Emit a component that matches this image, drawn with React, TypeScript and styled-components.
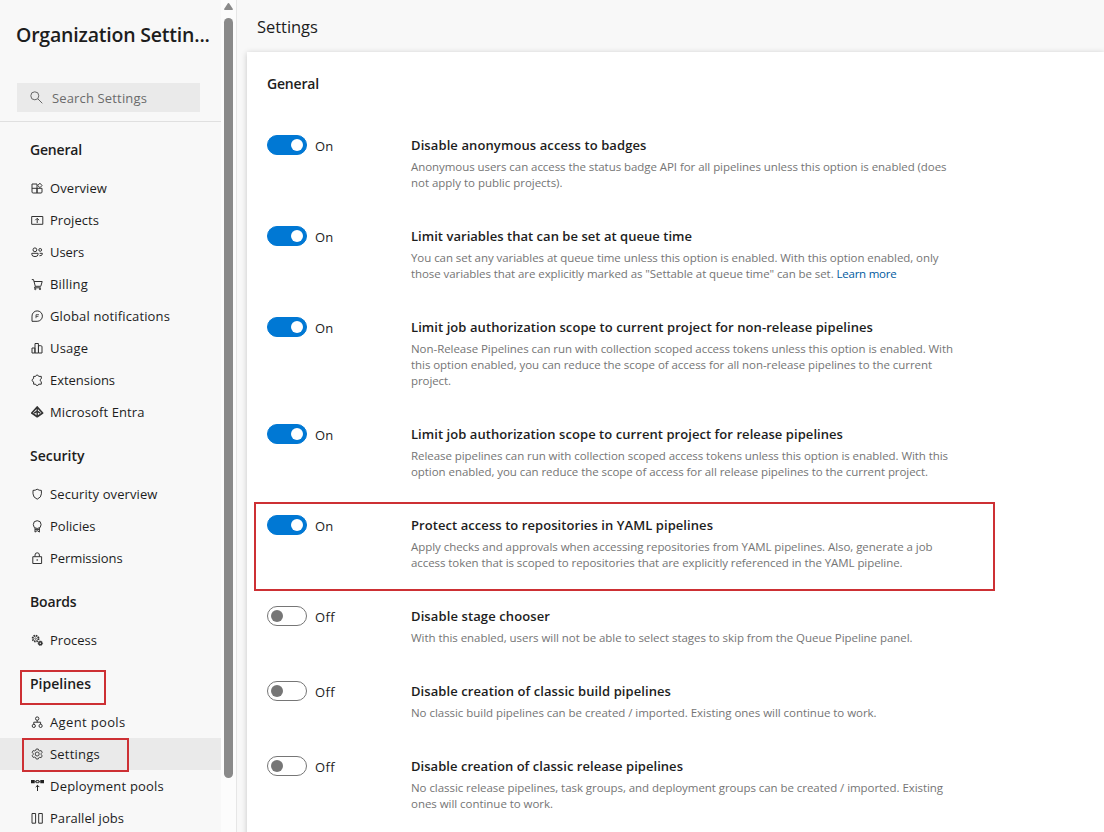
import React from 'react';
import styled, { createGlobalStyle } from 'styled-components';

const GlobalStyle = createGlobalStyle`
  *, *::before, *::after { box-sizing: border-box; }
  body {
    margin: 0;
    overflow: hidden;
    background: #f8f8f8;
    color: #1d1d1d;
    font-family: "Open Sans", "Noto Sans", sans-serif;
    font-size: 13px;
  }
`;

const Page = styled.div`
  display: flex;
  width: 100%;
  height: 832px;
  overflow: hidden;
`;

const Sidebar = styled.aside`
  flex: none;
  width: 221px;
  height: 832px;
  overflow: hidden;
`;

const SidebarTop = styled.header`
  height: 122px;
  padding: 20px 0 0 16px;
  border-bottom: 1px solid #e0e0e0;
`;

const Tracked = styled.span<{ $track?: number }>`
  white-space: pre;
  letter-spacing: ${({ $track = 0 }) => $track}px;
`;

const OrgTitle = styled.h1`
  margin: 0;
  font-size: 19.5px;
  line-height: 30px;
  font-weight: 600;
  white-space: nowrap;
`;

const SearchBox = styled.div`
  display: flex;
  align-items: center;
  gap: 9px;
  width: 183px;
  height: 29px;
  margin-top: 33px;
  margin-left: 1px;
  padding: 0 0 0 13px;
  background: #eaeaea;
  color: #6b6b6b;
`;

const NavHeading = styled.h2`
  display: flex;
  align-items: center;
  height: 50px;
  margin: 0;
  padding: 4px 0 0 30px;
  font-size: 14px;
  font-weight: 600;
`;

const NavItem = styled.div<{ $selected?: boolean }>`
  display: flex;
  align-items: center;
  gap: 6px;
  height: 32px;
  padding-left: 31px;
  background: ${({ $selected }) => ($selected ? '#eaeaea' : 'transparent')};
`;

const NavIcon = styled.svg<{ $muted?: boolean }>`
  flex: none;
  width: 13px;
  height: 13px;
  fill: none;
  stroke: ${({ $muted }) => ($muted ? '#666' : '#333')};
  stroke-width: 1;
`;

const NavMark = styled.div<{ $top: number; $left: number; $width: number; $height: number }>`
  position: relative;
  &::after {
    content: '';
    position: absolute;
    z-index: 1;
    top: ${({ $top }) => $top}px;
    left: ${({ $left }) => $left}px;
    width: ${({ $width }) => $width}px;
    height: ${({ $height }) => $height}px;
    border: 2px solid #cd3034;
  }
`;

const ScrollTrack = styled.div`
  flex: none;
  display: flex;
  flex-direction: column;
  align-items: center;
  width: 16px;
  height: 832px;
  padding-top: 2px;
  background: #fcfcfc;
  border-right: 1px solid #e6e6e6;
`;

const ScrollArrow = styled.svg`
  width: 9px;
  height: 9px;
  fill: #8a8a8a;
`;

const ScrollThumb = styled.div`
  width: 9px;
  height: 760px;
  margin-top: 7px;
  border-radius: 4.5px;
  background: #8a8a8a;
`;

const Main = styled.main`
  display: flex;
  flex-direction: column;
  flex: 1;
  min-width: 0;
  padding-left: 10px;
`;

const MainTitle = styled.h1`
  flex: none;
  height: 52px;
  margin: 0;
  padding: 14px 0 0 10px;
  font-size: 16.5px;
  line-height: 26px;
  font-weight: 400;
`;

const Card = styled.section`
  flex: 1;
  padding: 20px 0 0 20px;
  background: #fff;
  box-shadow: 0 1px 6px rgba(0, 0, 0, 0.2);
`;

const CardTitle = styled.h2`
  height: 63px;
  margin: 0;
  font-size: 14px;
  line-height: 24px;
  font-weight: 600;
`;

const SettingRow = styled.div`
  position: relative;
  display: flex;
  width: 728px;
  padding-bottom: 35px;
`;

const RowMark = styled.div`
  position: absolute;
  top: -13px;
  left: -13px;
  width: 741px;
  height: 89px;
  border: 2px solid #cd3034;
`;

const ToggleCell = styled.div`
  display: flex;
  gap: 8px;
  width: 144px;
  line-height: 22px;
`;

const Switch = styled.div<{ $on: boolean }>`
  display: flex;
  align-items: center;
  justify-content: ${({ $on }) => ($on ? 'flex-end' : 'flex-start')};
  width: 40px;
  height: 20px;
  padding: 0 3px;
  border: 1px solid ${({ $on }) => ($on ? '#0078d4' : '#767676')};
  border-radius: 10px;
  background: ${({ $on }) => ($on ? '#0078d4' : '#fff')};
  &::after {
    content: '';
    width: 12px;
    height: 12px;
    border-radius: 50%;
    background: ${({ $on }) => ($on ? '#fff' : '#767676')};
  }
`;

const SettingTitle = styled.h3`
  margin: 0 0 4px;
  font-size: 13px;
  line-height: 20px;
  font-weight: 600;
`;

const Line = styled.div`
  color: #757575;
  font-size: 11.5px;
  line-height: 16px;
  white-space: pre;
`;

const Link = styled.a`
  color: #005a9e;
  letter-spacing: -0.24px;
`;

const icons: Record<string, React.ReactNode> = {
  overview: (
    <path d="M1 2h5v9H2.2Q1 11 1 10zM1 6.3h10M6 6.3V11h4q1 0 1-1V6.3M8.9 1.2 11 3.5 8.9 5.7 6.8 3.5z" />
  ),
  projects: <path d="M.7 2.5h11.1v7.8H.7zM6.2 9V4.6M4.3 6.2l1.9-1.9 1.9 1.9" />,
  users: (
    <>
      <circle cx="3.9" cy="3.8" r="1.9" />
      <circle cx="9.2" cy="3.9" r="1.4" />
      <path d="M.8 7.3h6.3v1q0 2.3-3.1 2.3T.8 8.3zM8.6 7.3h2.7v.8q0 1.7-2.9 1.7" />
    </>
  ),
  billing: (
    <>
      <path d="M.8 1.6h1.7l1.8 6.7h5.5l1.4-4.8H3M4.3 8.3l-.9 1.5h6.3" />
      <circle cx="4.3" cy="11" r=".7" />
      <circle cx="9" cy="11" r=".7" />
    </>
  ),
  notifications: (
    <>
      <path d="M1 11.3V6.1a5.2 5.2 0 1 1 5.2 5.2z" />
      <path d="M5 8.2V4.7h3M5 6.4h2.4" strokeWidth=".8" />
    </>
  ),
  usage: <path d="M1 6h2.9v5H1zM4 1.5h3.4V11H4zM7.5 3.7h2.3q1.2 0 1.2 1.1V11H7.5z" />,
  extensions: (
    <path
      d="M2.6 2.4h2c.2-1.8 2.9-1.8 3.1 0h2.6v2.3c-1.5.3-1.5 2.7 0 3v2.5H7.7c-.2 1.8-2.9 1.8-3.1 0h-2V7.9c-2-.2-2-3.1 0-3.3z"
      strokeLinejoin="round"
    />
  ),
  entra: (
    <>
      <path d="M6.2 1 11.6 7 6.2 10.7.8 7z" strokeWidth="1.7" strokeLinejoin="round" />
      <path d="M6.2 2v8M3.2 7.1l3-2 3 2" strokeWidth="1.4" />
    </>
  ),
  shield: <path d="M6.2 1.2Q8 2.5 10.4 2.4v3.4q0 3.6-4.2 5.4Q2 9.4 2 5.8V2.4Q4.4 2.5 6.2 1.2z" />,
  policies: (
    <>
      <circle cx="6.2" cy="4.6" r="3.9" />
      <path d="M4 8v4.1l2.2-1.5 2.2 1.5V8M4 9.6h4.4" />
    </>
  ),
  lock: (
    <>
      <path d="M1.8 4.7h8.8v6.8H1.8zM4 4.6V3a2.2 2.2 0 0 1 4.4 0v1.6" />
      <path d="M5.6 8h1.2" strokeWidth="1.3" />
    </>
  ),
  process: (
    <>
      <circle cx="4.6" cy="4.6" r="3.2" strokeWidth="1.4" strokeDasharray="1.5 1" />
      <circle cx="4.6" cy="4.6" r="2.4" strokeWidth=".7" />
      <circle cx="4.6" cy="4.6" r=".8" strokeWidth=".7" />
      <circle cx="9.3" cy="9.2" r="1.5" strokeWidth="1.6" />
      <circle cx="9.3" cy="9.2" r="2.3" strokeWidth=".7" strokeDasharray="1 .8" />
    </>
  ),
  agents: (
    <>
      <circle cx="6.2" cy="2.6" r="1.7" />
      <circle cx="2.8" cy="9.9" r="1.6" />
      <circle cx="9.6" cy="9.9" r="1.6" />
      <path d="M6.2 4.3v1.9M2.8 8.2v-2h6.8v2" />
    </>
  ),
  gear: (
    <>
      <path
        d="M5.2 1h2l.5 1.4 1 .5 1.5-.3 1 1.7-1 1.2v1.2l1 1.2-1 1.7-1.5-.3-1 .5L7.2 11h-2l-.5-1.4-1-.5-1.5.3-1-1.7 1-1.2V5.5l-1-1.2 1-1.7 1.5.3 1-.5z"
        strokeWidth=".9"
      />
      <circle cx="6.2" cy="6" r="2" strokeWidth=".9" />
    </>
  ),
  deploy: (
    <>
      <path d="M0 0h3.7v3.2H0zM9.300 0H13v3.200H9.300z" fill="#222" stroke="none" />
      <path d="M5.100.6h2.800v2.100H5.100zM3.700 1.700h1.400M7.900 1.700h1.400" stroke="#222" strokeWidth=".9" />
      <path d="M6.500 11V5.300M4.700 7.100l1.800-1.800 1.800 1.800" stroke="#222" />
    </>
  ),
  parallel: <path d="M1 1.5h3.6v9.7H1zM7.7 1.5h3.6v9.7H7.700z" />,
};

type Item = { icon: string; label: string; track: number; selected?: boolean };
type Group = { title: string; track: number; marked?: boolean; items: Item[] };

const groups: Group[] = [
  {
    title: 'General',
    track: -0.18,
    items: [
      { icon: 'overview', label: 'Overview', track: 0.08 },
      { icon: 'projects', label: 'Projects', track: 0.05 },
      { icon: 'users', label: 'Users', track: -0.1 },
      { icon: 'billing', label: 'Billing', track: 0.2 },
      { icon: 'notifications', label: 'Global notifications', track: 0.145 },
      { icon: 'usage', label: 'Usage', track: 0.2 },
      { icon: 'extensions', label: 'Extensions', track: -0.04 },
      { icon: 'entra', label: 'Microsoft Entra', track: 0.09 },
    ],
  },
  {
    title: 'Security',
    track: -0.01,
    items: [
      { icon: 'shield', label: 'Security overview', track: 0.1 },
      { icon: 'policies', label: 'Policies', track: 0.04 },
      { icon: 'lock', label: 'Permissions', track: -0.08 },
    ],
  },
  {
    title: 'Boards',
    track: -0.16,
    items: [{ icon: 'process', label: 'Process', track: 0.02 }],
  },
  {
    title: 'Pipelines',
    track: 0.014,
    marked: true,
    items: [
      { icon: 'agents', label: 'Agent pools', track: 0.35 },
      { icon: 'gear', label: 'Settings', track: 0.22, selected: true },
      { icon: 'deploy', label: 'Deployment pools', track: 0.207 },
      { icon: 'parallel', label: 'Parallel jobs', track: 0.05 },
    ],
  },
];

type Setting = {
  title: string;
  track: number;
  on: boolean;
  lines: [string, number][];
  link?: string;
  marked?: boolean;
};

const settings: Setting[] = [
  {
    title: 'Disable anonymous access to badges',
    track: 0.102,
    on: true,
    lines: [
      ['Anonymous users can access the status badge API for all pipelines unless this option is enabled (does', -0.059],
      ['not apply to public projects).', -0.021],
    ],
  },
  {
    title: 'Limit variables that can be set at queue time',
    track: 0.034,
    on: true,
    lines: [
      ['You can set any variables at queue time unless this option is enabled. With this option enabled, only', -0.062],
      ['those variables that are explicitly marked as "Settable at queue time" can be set. ', -0.075],
    ],
    link: 'Learn more',
  },
  {
    title: 'Limit job authorization scope to current project for non-release pipelines',
    track: 0.072,
    on: true,
    lines: [
      ['Non-Release Pipelines can run with collection scoped access tokens unless this option is enabled. With', -0.049],
      ['this option enabled, you can reduce the scope of access for all non-release pipelines to the current', -0.058],
      ['project.', -0.08],
    ],
  },
  {
    title: 'Limit job authorization scope to current project for release pipelines',
    track: 0.057,
    on: true,
    lines: [
      ['Release pipelines can run with collection scoped access tokens unless this option is enabled. With this', -0.061],
      ['option enabled, you can reduce the scope of access for all release pipelines to the current project.', -0.061],
    ],
  },
  {
    title: 'Protect access to repositories in YAML pipelines',
    track: 0.068,
    on: true,
    marked: true,
    lines: [
      ['Apply checks and approvals when accessing repositories from YAML pipelines. Also, generate a job', -0.053],
      ['access token that is scoped to repositories that are explicitly referenced in the YAML pipeline.', -0.073],
    ],
  },
  {
    title: 'Disable stage chooser',
    track: 0.109,
    on: false,
    lines: [
      ['With this enabled, users will not be able to select stages to skip from the Queue Pipeline panel.', -0.048],
    ],
  },
  {
    title: 'Disable creation of classic build pipelines',
    track: 0.082,
    on: false,
    lines: [
      ['No classic build pipelines can be created / imported. Existing ones will continue to work.', -0.04],
    ],
  },
  {
    title: 'Disable creation of classic release pipelines',
    track: 0.036,
    on: false,
    lines: [
      ['No classic release pipelines, task groups, and deployment groups can be created / imported. Existing', -0.055],
      ['ones will continue to work.', -0.042],
    ],
  },
];

function NavRow({ item }: { item: Item }) {
  const row = (
    <NavItem $selected={item.selected}>
      <NavIcon viewBox="0 0 13 13">{icons[item.icon]}</NavIcon>
      <Tracked $track={item.track}>{item.label}</Tracked>
    </NavItem>
  );
  return item.selected ? (
    <NavMark $top={0} $left={22} $width={107} $height={34}>{row}</NavMark>
  ) : row;
}

function NavGroup({ group }: { group: Group }) {
  const heading = (
    <NavHeading>
      <Tracked $track={group.track}>{group.title}</Tracked>
    </NavHeading>
  );
  return (
    <nav>
      {group.marked ? (
        <NavMark $top={14} $left={20} $width={86} $height={35}>{heading}</NavMark>
      ) : heading}
      {group.items.map((item) => <NavRow key={item.label} item={item} />)}
    </nav>
  );
}

function SettingEntry({ setting }: { setting: Setting }) {
  return (
    <SettingRow>
      {setting.marked && <RowMark />}
      <ToggleCell>
        <Switch $on={setting.on} />
        <Tracked $track={setting.on ? 0.2 : 0.38}>{setting.on ? 'On' : 'Off'}</Tracked>
      </ToggleCell>
      <div>
        <SettingTitle>
          <Tracked $track={setting.track}>{setting.title}</Tracked>
        </SettingTitle>
        {setting.lines.map(([text, track], i) => (
          <Line key={text}>
            <Tracked $track={track}>{text}</Tracked>
            {setting.link && i === setting.lines.length - 1 && <Link>{setting.link}</Link>}
          </Line>
        ))}
      </div>
    </SettingRow>
  );
}

export default function App() {
  return (
    <>
      <GlobalStyle />
      <Page>
        <Sidebar>
          <SidebarTop>
            <OrgTitle>
              <Tracked $track={-0.2}>Organization Settin...</Tracked>
            </OrgTitle>
            <SearchBox>
              <NavIcon $muted viewBox="0 0 13 13">
                <circle cx="4.800" cy="4.800" r="4" />
                <path d="m7.800 7.800 4.500 4.500" />
              </NavIcon>
              <Tracked $track={0.15}>Search Settings</Tracked>
            </SearchBox>
          </SidebarTop>
          {groups.map((group) => <NavGroup key={group.title} group={group} />)}
        </Sidebar>
        <ScrollTrack>
          <ScrollArrow viewBox="0 0 9 9">
            <path d="M3.900 1.300q.6-.7 1.200 0L8.900 7q.2 1-.8 1H.9Q-.1 8 .1 7z" />
          </ScrollArrow>
          <ScrollThumb />
        </ScrollTrack>
        <Main>
          <MainTitle>
            <Tracked $track={-0.05}>Settings</Tracked>
          </MainTitle>
          <Card>
            <CardTitle>
              <Tracked $track={-0.18}>General</Tracked>
            </CardTitle>
            {settings.map((setting) => <SettingEntry key={setting.title} setting={setting} />)}
          </Card>
        </Main>
      </Page>
    </>
  );
}
